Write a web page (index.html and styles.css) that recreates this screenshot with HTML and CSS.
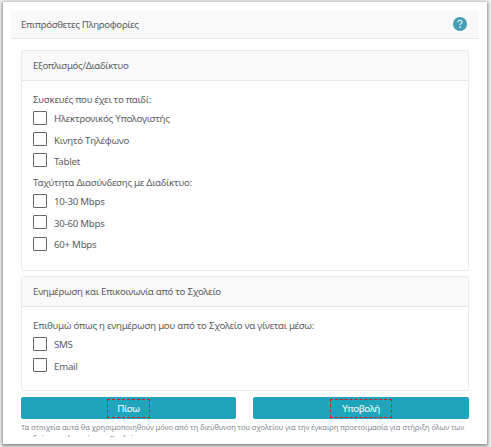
FILE: index.html
```html
<!DOCTYPE html>
<html lang="el">
<head>
    <meta charset="utf-8">
    <title>Επιπρόσθετες Πληροφορίες</title>
    <link rel="stylesheet" href="styles.css">
</head>
<body>
    <div class="page">
        <div class="page-header">
            <span class="page-title">Επιπρόσθετες Πληροφορίες</span>
            <svg class="help" viewBox="0 0 14 14">
                <circle cx="7" cy="7" r="7" fill="#459db8"/>
                <path d="M5 5.2C5 4 5.9 3.4 7 3.4s2 .7 2 1.7C9 6.5 7.2 6.5 7.2 8.2" fill="none" stroke="#d5eaf1" stroke-width="1.4"/>
                <circle cx="7.1" cy="10.2" r=".9" fill="#d5eaf1"/>
            </svg>
        </div>

        <div class="content">
            <div class="card card-equipment">
                <div class="card-header title-equipment">Εξοπλισμός/Διαδίκτυο</div>
                <div class="card-body">
                    <div class="group-label">Συσκευές που έχει το παιδί:</div>
                    <label class="check"><input type="checkbox"><span>Ηλεκτρονικός Υπολογιστής</span></label>
                    <label class="check"><input type="checkbox"><span>Κινητό Τηλέφωνο</span></label>
                    <label class="check"><input type="checkbox"><span>Tablet</span></label>
                    <div class="group-label group-speed">Ταχύτητα Διασύνδεσης με Διαδίκτυο:</div>
                    <label class="check"><input type="checkbox"><span>10-30 Mbps</span></label>
                    <label class="check"><input type="checkbox"><span>30-60 Mbps</span></label>
                    <label class="check"><input type="checkbox"><span>60+ Mbps</span></label>
                </div>
            </div>

            <div class="card card-contact">
                <div class="card-header">Ενημέρωση και Επικοινωνία από το Σχολείο</div>
                <div class="card-body">
                    <div class="group-label">Επιθυμώ όπως η ενημέρωση μου από το Σχολείο να γίνεται μέσω:</div>
                    <label class="check"><input type="checkbox"><span>SMS</span></label>
                    <label class="check"><input type="checkbox"><span>Email</span></label>
                </div>
            </div>

            <div class="buttons">
                <button type="button"><span class="mark mark-back">Πίσω</span></button>
                <button type="button"><span class="mark mark-submit">Υποβολή</span></button>
            </div>

            <p class="note">Τα στοιχεία αυτά θα χρησιμοποιηθούν μόνο από τη διεύθυνση του σχολείου για την έγκαιρη προετοιμασία για στήριξη όλων των<br>παιδιών που φοιτούν στο Σχολείο</p>
        </div>
    </div>
</body>
</html>
```
FILE: styles.css
```css
* {
    box-sizing: border-box;
}

body {
    margin: 0;
    height: 447px;
    padding: 2px 4px 3px 3px;
    background: #f2f2f2;
    font-family: "Noto Sans", "Open Sans", sans-serif;
    font-size: 9.7px;
    letter-spacing: -0.26px;
    color: #5a5e62;
    overflow: hidden;
}

.page {
    height: 442px;
    padding: 9px 8px 0;
    background: #fff;
    box-shadow: 0 1px 3px 1px #888;
}

.page-header {
    display: flex;
    align-items: center;
    justify-content: space-between;
    height: 28px;
    padding: 0 12px 1px 10px;
    background: #f9f9f9;
    border-bottom: 1px solid #e6e6e6;
}

.page-title {
    letter-spacing: -0.34px;
}

.help {
    width: 14px;
    height: 14px;
    margin-top: -1px;
}

.content {
    padding: 11px 10px 0;
}

.card {
    border: 1px solid #ebebeb;
    border-radius: 2px;
}

.card-equipment {
    height: 221px;
    margin-bottom: 5px;
}

.card-contact {
    height: 115px;
}

.card-header {
    display: flex;
    align-items: center;
    height: 30px;
    padding: 0 11px;
    background: #f9f9f9;
    border-bottom: 1px solid #e6e6e6;
}

.title-equipment {
    letter-spacing: -0.32px;
}

.card-body {
    padding: 12px 11px 0;
}

.group-label {
    height: 14px;
    line-height: 14px;
    white-space: nowrap;
}

.group-speed {
    margin-top: 5px;
}

.check {
    display: flex;
    align-items: center;
    height: 21.4px;
}

.check span {
    padding-top: 2px;
}

.check input {
    appearance: none;
    width: 14px;
    height: 14px;
    margin: 0 7px 0 0;
    border: 1px solid #666;
    border-radius: 1px;
    background: #fff;
}

.buttons {
    display: grid;
    grid-template-columns: 215px 216px;
    gap: 17px;
    margin-top: 6px;
}

button {
    display: flex;
    align-items: flex-start;
    justify-content: center;
    height: 22px;
    padding: 2px 0 0;
    border: none;
    border-radius: 2px;
    background: #1fa5bb;
    color: #fff;
    font-family: inherit;
    font-size: 9.8px;
    letter-spacing: -0.4px;
}

.mark {
    height: 19px;
    line-height: 17px;
    border: 1px dashed #e8141c;
}

.mark-back {
    width: 43px;
}

.mark-submit {
    width: 62px;
}

.note {
    height: 15px;
    margin: 3px 0 0;
    overflow: hidden;
    font-size: 7.6px;
    letter-spacing: -0.13px;
    line-height: 11px;
    color: #868c92;
    white-space: nowrap;
}
```
